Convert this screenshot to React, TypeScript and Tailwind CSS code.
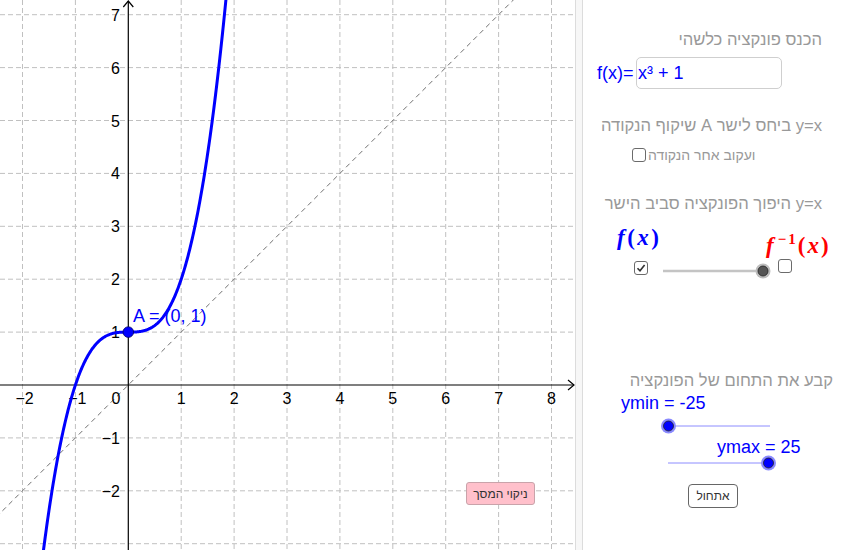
import React from "react"

const OX = 128.3
const OY = 385
const S = 52.9
const px = (x: number) => OX + x * S
const py = (y: number) => OY - y * S

const W = 575
const H = 550

function curvePath() {
  const pts: string[] = []
  for (let x = -1.63; x <= 1.87; x += 0.01) {
    pts.push(`${px(x).toFixed(2)},${py(x * x * x + 1).toFixed(2)}`)
  }
  return "M" + pts.join(" L")
}

const xTicks = [-2, -1, 1, 2, 3, 4, 5, 6, 7, 8]
const yTicks = [-3, -2, -1, 1, 2, 3, 4, 5, 6, 7]

function Graph() {
  return (
    <div className="relative w-[575px] h-[550px] bg-white shrink-0">
      <svg width={W} height={H} viewBox={`0 0 ${W} ${H}`} className="block">
        {/* grid */}
        <g stroke="#c0c0c0" strokeWidth={1} strokeDasharray="5 3">
          {xTicks.map((k) => (
            <line key={"gx" + k} x1={px(k)} y1={0} x2={px(k)} y2={H} />
          ))}
          {yTicks.map((k) => (
            <line key={"gy" + k} x1={0} y1={py(k)} x2={W} y2={py(k)} />
          ))}
        </g>

        {/* y = x */}
        <line
          x1={px(-2.5)}
          y1={py(-2.5)}
          x2={px(7.4)}
          y2={py(7.4)}
          stroke="#707070"
          strokeWidth={1}
          strokeDasharray="5 4"
        />

        {/* axes */}
        <g stroke="#000" strokeWidth={1.2} fill="none">
          <line x1={0} y1={OY} x2={W - 1} y2={OY} />
          <polyline points={`${W - 7},${OY - 5} ${W - 1},${OY} ${W - 7},${OY + 5}`} />
          <line x1={OX} y1={H} x2={OX} y2={1} />
          <polyline points={`${OX - 5},7 ${OX},1 ${OX + 5},7`} />
        </g>

        {/* tick labels */}
        <g fill="#000" fontSize={16}>
          {xTicks.map((k) => (
            <text key={"lx" + k} x={px(k) + (k < 0 ? 2 : 0)} y={403.5} textAnchor="middle">
              {k < 0 ? "\u2212" + Math.abs(k) : k}
            </text>
          ))}
          <text x={120.5} y={403.5} textAnchor="end">
            0
          </text>
          {yTicks
            .filter((k) => k !== -3)
            .map((k) => (
              <text key={"ly" + k} x={120} y={py(k) + 6} textAnchor="end">
                {k < 0 ? "\u2212" + Math.abs(k) : k}
              </text>
            ))}
        </g>

        {/* f(x) = x^3 + 1 */}
        <path d={curvePath()} stroke="#0000ff" strokeWidth={3} fill="none" strokeLinejoin="round" />

        {/* point A */}
        <circle cx={px(0)} cy={py(1)} r={5.3} fill="#0000ff" stroke="#000066" strokeWidth={0.8} />
        <text x={133} y={322} fill="#0000ff" fontSize={18}>
          A = (0, 1)
        </text>
      </svg>

      <button className="absolute left-[466px] top-[482px] w-[69px] h-[23px] bg-[#ffc0cb] border border-[#c9a3aa] rounded-[3px] text-[12px] text-[#333] flex items-center justify-center">
        <span dir="rtl">ניקוי המסך</span>
      </button>
    </div>
  )
}

function Checkbox({ checked }: { checked?: boolean }) {
  return (
    <div className="w-[14px] h-[14px] border-[1.5px] border-[#6b6b6b] rounded-[3px] bg-white flex items-center justify-center shrink-0">
      {checked && (
        <svg width="10" height="10" viewBox="0 0 10 10">
          <polyline points="1.5,5.2 4,7.8 8.6,2" fill="none" stroke="#333" strokeWidth={1.6} />
        </svg>
      )}
    </div>
  )
}

function Slider({
  width,
  knobX,
  lineColor,
  knobFill,
  haloColor,
  lineWidth,
}: {
  width: number
  knobX: number
  lineColor: string
  knobFill: string
  haloColor: string
  lineWidth: number
}) {
  return (
    <svg width={width} height={16} viewBox={`0 0 ${width} 16`} className="block">
      <line x1={8} y1={8} x2={width - 8} y2={8} stroke={lineColor} strokeWidth={lineWidth} />
      <circle cx={knobX} cy={8} r={7.5} fill={haloColor} />
      <circle cx={knobX} cy={8} r={5} fill={knobFill} stroke="#222" strokeWidth={0.8} />
    </svg>
  )
}

function Panel() {
  const gray = "text-[#999999]"
  return (
    <div className="flex-1 h-[550px] bg-white flex flex-col text-[16.6px]">
      <div dir="rtl" className={`mt-[30px] h-[20px] leading-[20px] pr-[39px] ${gray}`}>
        הכנס פונקציה כלשהי
      </div>

      <div className="mt-[7px] h-[32px] flex items-center pl-[14px]">
        <span className="w-[39px] text-[18px] text-[#0000ff] leading-none">f(x)=</span>
        <div className="w-[146px] h-[32px] border border-[#cfcfcf] rounded-[5px] flex items-center pl-[1px] text-[18px] text-[#0000ff]">
          x³ + 1
        </div>
      </div>

      <div dir="rtl" className={`mt-[27px] h-[20px] leading-[20px] pr-[39px] ${gray}`}>
        y=x ביחס לישר A שיקוף הנקודה
      </div>

      <div className="mt-[9px] h-[20px] flex items-center pl-[49px]">
        <Checkbox />
        <span dir="rtl" className={`ml-[2px] leading-[20px] text-[14px] ${gray}`}>
          ועקוב אחר הנקודה
        </span>
      </div>

      <div dir="rtl" className={`mt-[29px] h-[20px] leading-[20px] pr-[39px] ${gray}`}>
        y=x היפוך הפונקציה סביב הישר
      </div>

      <div className="mt-[10px] h-[32px] flex items-start pl-[34px] font-['Liberation_Serif',serif] font-bold text-[23px] leading-none">
        <span className="w-[149px] mt-[2px] text-[#0000ff] tracking-[2.5px]">
          <i>f</i>(<i>x</i>)
        </span>
        <span className="mt-[10px] text-[#ff0000] tracking-[2px] whitespace-nowrap">
          <i>f</i>
          <span className="text-[15px] relative -top-[9px] ml-[2px]">−1</span>(<i>x</i>)
        </span>
      </div>

      <div className="h-[22px] flex items-start pl-[51px]">
        <div className="mt-[5px]">
          <Checkbox checked />
        </div>
        <div className="ml-[7px] mt-[7px]">
          <Slider width={116} knobX={108} lineColor="#c4c4c4" lineWidth={2.5} knobFill="#555555" haloColor="#bdbdbd" />
        </div>
        <div className="ml-[7px] mt-[3px]">
          <Checkbox />
        </div>
      </div>

      <div dir="rtl" className={`mt-[93px] h-[20px] leading-[20px] pr-[28px] ${gray}`}>
        קבע את התחום של הפונקציה
      </div>

      <div className="mt-[4px] h-[16px] leading-[16px] pl-[38px] text-[18px] text-[#0000ff]">ymin = -25</div>

      <div className="mt-[7px] pl-[77px]">
        <Slider width={118} knobX={8.5} lineColor="#8c8cff" lineWidth={1} knobFill="#0000ff" haloColor="#8a8aff" />
      </div>

      <div className="mt-[5px] h-[16px] leading-[16px] pl-[134px] text-[18px] text-[#0000ff]">ymax = 25</div>

      <div className="pl-[77px]">
        <Slider width={118} knobX={108.5} lineColor="#8c8cff" lineWidth={1} knobFill="#0000ff" haloColor="#8a8aff" />
      </div>

      <div className="mt-[13px] pl-[105px]">
        <button className="w-[50px] h-[24px] border-[1.5px] border-[#666] rounded-[4px] bg-white text-[12px] text-[#333] flex items-center justify-center">
          <span dir="rtl">אתחול</span>
        </button>
      </div>
    </div>
  )
}

export default function App() {
  return (
    <div className="w-[861px] h-[550px] flex overflow-hidden bg-white font-['Liberation_Sans','DejaVu_Sans',sans-serif]">
      <Graph />
      <div className="w-[8px] h-[550px] bg-[#f7f7f7] border-x border-[#dcdcdc] shrink-0" />
      <Panel />
    </div>
  )
}
